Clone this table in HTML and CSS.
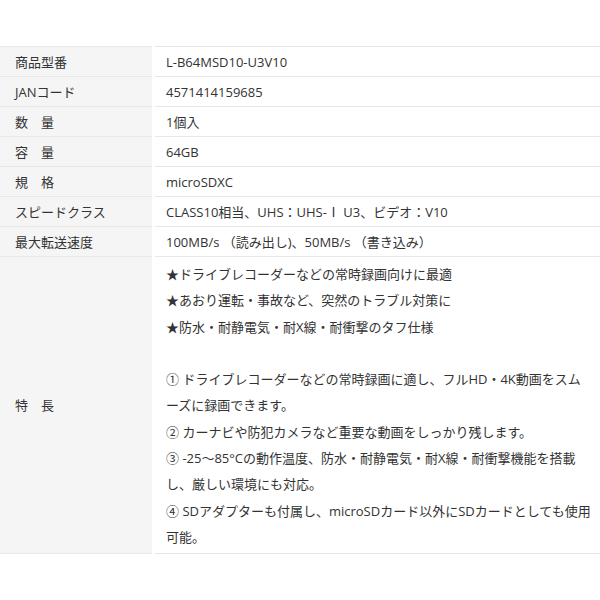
FILE: index.html
```html
<!DOCTYPE html>
<html lang="ja">
  <head>
    <meta charset="UTF-8" />
    <meta name="viewport" content="width=device-width, initial-scale=1.0" />
    <title>商品仕様</title>
    <link rel="stylesheet" href="styles.css">
  </head>
  <body>
    <table class="spec">
      <tbody>
        <tr>
          <th>商品型番</th>
          <td>L-B64MSD10-U3V10</td>
        </tr>
        <tr>
          <th>JANコード</th>
          <td>4571414159685</td>
        </tr>
        <tr>
          <th>数　量</th>
          <td>1個入</td>
        </tr>
        <tr>
          <th>容　量</th>
          <td>64GB</td>
        </tr>
        <tr>
          <th>規　格</th>
          <td>microSDXC</td>
        </tr>
        <tr>
          <th>スピードクラス</th>
          <td>CLASS10相当、UHS：UHS-Ⅰ U3、ビデオ：V10</td>
        </tr>
        <tr>
          <th>最大転送速度</th>
          <td>100MB/s （読み出し)、50MB/s （書き込み）</td>
        </tr>
        <tr class="features">
          <th>特　長</th>
          <td>
            ★ドライブレコーダーなどの常時録画向けに最適<br>
            ★あおり運転・事故など、突然のトラブル対策に<br>
            ★防水・耐静電気・耐X線・耐衝撃のタフ仕様<br>
            <br>
            ① ドライブレコーダーなどの常時録画に適し、フルHD・4K動画をスムーズに録画できます。<br>
            ② カーナビや防犯カメラなど重要な動画をしっかり残します。<br>
            ③ -25～85°Cの動作温度、防水・耐静電気・耐X線・耐衝撃機能を搭載し、厳しい環境にも対応。<br>
            ④ SDアダプターも付属し、microSDカード以外にSDカードとしても使用可能。
          </td>
        </tr>
      </tbody>
    </table>
  </body>
</html>
```

FILE: styles.css
```css
body {
  font-family: "Open Sans", "Noto Sans CJK JP", sans-serif;
  font-size: 13px;
  color: #333;
  margin: 0;
  padding: 46px 0 0;
  background: #fff;
}
.spec {
  width: 100%;
  border-collapse: collapse;
  border-top: 1px solid #e8e8e8;
}
.spec th,
.spec td {
  border-bottom: 1px solid #e8e8e8;
  text-align: left;
  vertical-align: middle;
  height: 29px;
  padding: 0;
  line-height: 26px;
}
.spec th {
  width: 137px;
  padding-left: 15px;
  background-color: #f5f5f5;
  font-weight: normal;
  border-right: 3px solid #fff;
}
.spec td {
  padding: 0 8px 0 11px;
}
.features td {
  line-height: 26.3px;
  padding-top: 4px;
  padding-bottom: 3px;
}
```
